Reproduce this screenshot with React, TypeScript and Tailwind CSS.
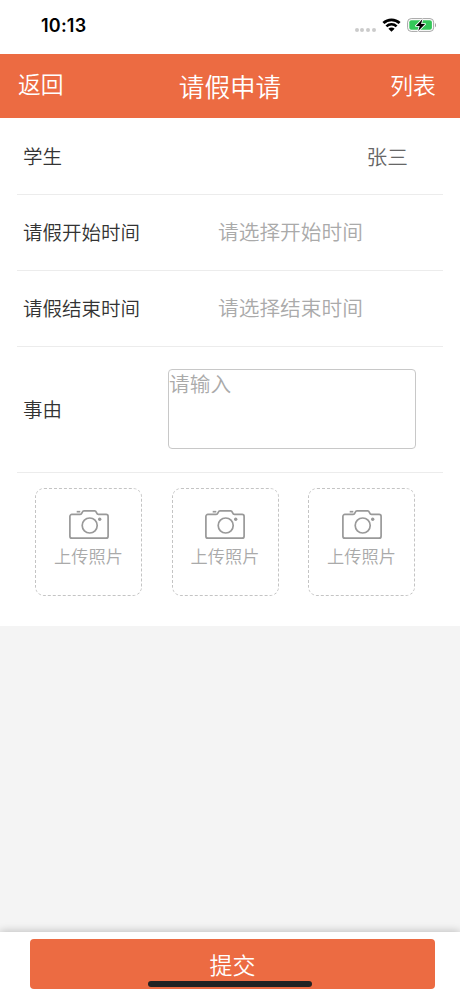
const StatusBar = () => {
  return (
    <div className="flex h-[54px] shrink-0 items-start justify-between pl-[41px] pr-[23px] pt-[14px]">
      <span className="font-['Inter','Liberation_Sans',sans-serif] text-[18px] font-semibold leading-[24px] tracking-[0.2px] text-black">
        10:13
      </span>
      <div className="flex h-[22px] items-center">
        {/* no signal, four grey dots */}
        <div className="mt-[9px] flex gap-[1.8px]">
          <i className="size-[4px] rounded-full bg-[#cbcbcb]" />
          <i className="size-[4px] rounded-full bg-[#cbcbcb]" />
          <i className="size-[4px] rounded-full bg-[#cbcbcb]" />
          <i className="size-[4px] rounded-full bg-[#cbcbcb]" />
        </div>
        <svg className="ml-[6px] h-[14px] w-[19px]" viewBox="0 0 19 14" fill="none" stroke="#000">
          <path d="M1.4 5.1a11.6 11.6 0 0 1 16.2 0" strokeWidth="2.8" />
          <path d="M4.4 8.4a7.3 7.3 0 0 1 10.2 0" strokeWidth="2.6" />
          <path d="M9.5 13.8 6.4 10.8a4.3 4.3 0 0 1 6.2 0Z" fill="#000" stroke="none" />
        </svg>
        <svg className="ml-[6px] h-[16px] w-[30px]" viewBox="0 0 30 16">
          <rect x="0.6" y="1.6" width="26" height="12.8" rx="3.6" fill="#fff" stroke="#a5a5a5" strokeWidth="1" />
          <rect x="2.3" y="3.2" width="22.6" height="9.6" rx="2" fill="#34c759" />
          <path d="M28 6v4.2c1.3-.5 1.3-3.7 0-4.2Z" fill="#999" />
          <path
            d="M15.4 2.3 8.9 8.9h3.8l-1.5 5 6.9-6.8h-4Z"
            fill="#000"
            stroke="#fff"
            strokeWidth="1.7"
            paintOrder="stroke"
            strokeLinejoin="round"
          />
        </svg>
      </div>
    </div>
  );
};

const Header = () => {
  return (
    <header className="flex h-16 shrink-0 items-center justify-between bg-[#ec6b42] pl-[18px] pr-[24px] text-white">
      <button className="mb-[4px] w-[52px] text-left text-[22.8px] leading-8">返回</button>
      <h1 className="mb-px text-[25.6px] leading-9">请假申请</h1>
      <button className="mb-[2px] w-[46px] text-[22.8px] leading-8">列表</button>
    </header>
  );
};

const DateRow = ({ label, placeholder }: { label: string; placeholder: string }) => {
  return (
    <div className="mx-[17px] flex h-[76px] shrink-0 items-center border-b border-[#ececec] pb-px pl-[6px]">
      <span className="w-[195px] text-[19.5px] text-[#333]">{label}</span>
      <span className="text-[20.7px] text-[#aaa]">{placeholder}</span>
    </div>
  );
};

const CameraIcon = () => {
  return (
    <svg className="h-[31px] w-[40px]" viewBox="0 0 40 31" fill="none" stroke="#999" strokeWidth="1.7">
      <path d="M2.9 5.4H11.2C13.6 5.4 12.6 1.9 15 1.9H25.6C28 1.9 27 5.4 29.4 5.4H37.1A2 2 0 0 1 39.1 7.4V27.2A2 2 0 0 1 37.1 29.2H2.9A2 2 0 0 1 .9 27.2V7.4A2 2 0 0 1 2.9 5.4Z" />
      <circle cx="20.7" cy="16.5" r="7.5" />
      <path d="M7.7 2.7h3.6" />
      <circle cx="30.7" cy="10.3" r="1.7" fill="#999" stroke="none" />
    </svg>
  );
};

const UploadBox = () => {
  return (
    <button className="flex h-[108px] w-[107px] flex-col items-center rounded-[9px] border border-dashed border-[#c4c4c4] pt-[20px]">
      <CameraIcon />
      <span className="mt-[3px] text-[17.2px] leading-[26px] text-[#aaa]">上传照片</span>
    </button>
  );
};

const App = () => {
  return (
    <div className="flex h-[996px] w-[460px] flex-col overflow-hidden bg-white font-['Noto_Sans_CJK_SC',sans-serif] font-[350]">
      <StatusBar />
      <Header />

      <div className="mx-[17px] flex h-[77px] shrink-0 items-center justify-between border-b border-[#ececec] pl-[6px] pr-[35px]">
        <span className="text-[19.5px] text-[#333]">学生</span>
        <span className="pt-px text-[20.7px] text-[#666]">张三</span>
      </div>
      <DateRow label="请假开始时间" placeholder="请选择开始时间" />
      <DateRow label="请假结束时间" placeholder="请选择结束时间" />

      <div className="mx-[17px] flex h-[126px] shrink-0 items-center border-b border-[#ececec] pb-[2px] pl-[6px]">
        <span className="w-[145px] text-[19.5px] text-[#333]">事由</span>
        <textarea
          className="block h-[80px] w-[248px] resize-none rounded-[4px] border border-[#c8c8c8] text-[20.7px] leading-[26px] outline-none placeholder:text-[#aaa]"
          placeholder="请输入"
        />
      </div>

      <div className="flex h-[153px] shrink-0 justify-between pl-[35px] pr-[45px] pt-[15px]">
        <UploadBox />
        <UploadBox />
        <UploadBox />
      </div>

      <div className="flex-1 bg-[#f4f4f4]" />

      {/* fixed bottom bar */}
      <footer className="relative h-[64px] shrink-0 bg-white pl-[30px] pr-[25px] pt-[7px] shadow-[0_-1px_8px_rgba(0,0,0,0.22)]">
        <button className="h-[50px] w-full rounded-[4px] bg-[#ec6b42] text-[23px] leading-[51px] text-white">
          提交
        </button>
        <div className="absolute bottom-[9px] left-[148px] h-[6px] w-[164px] rounded-full bg-[#222]" />
      </footer>
    </div>
  );
};

export default App;
